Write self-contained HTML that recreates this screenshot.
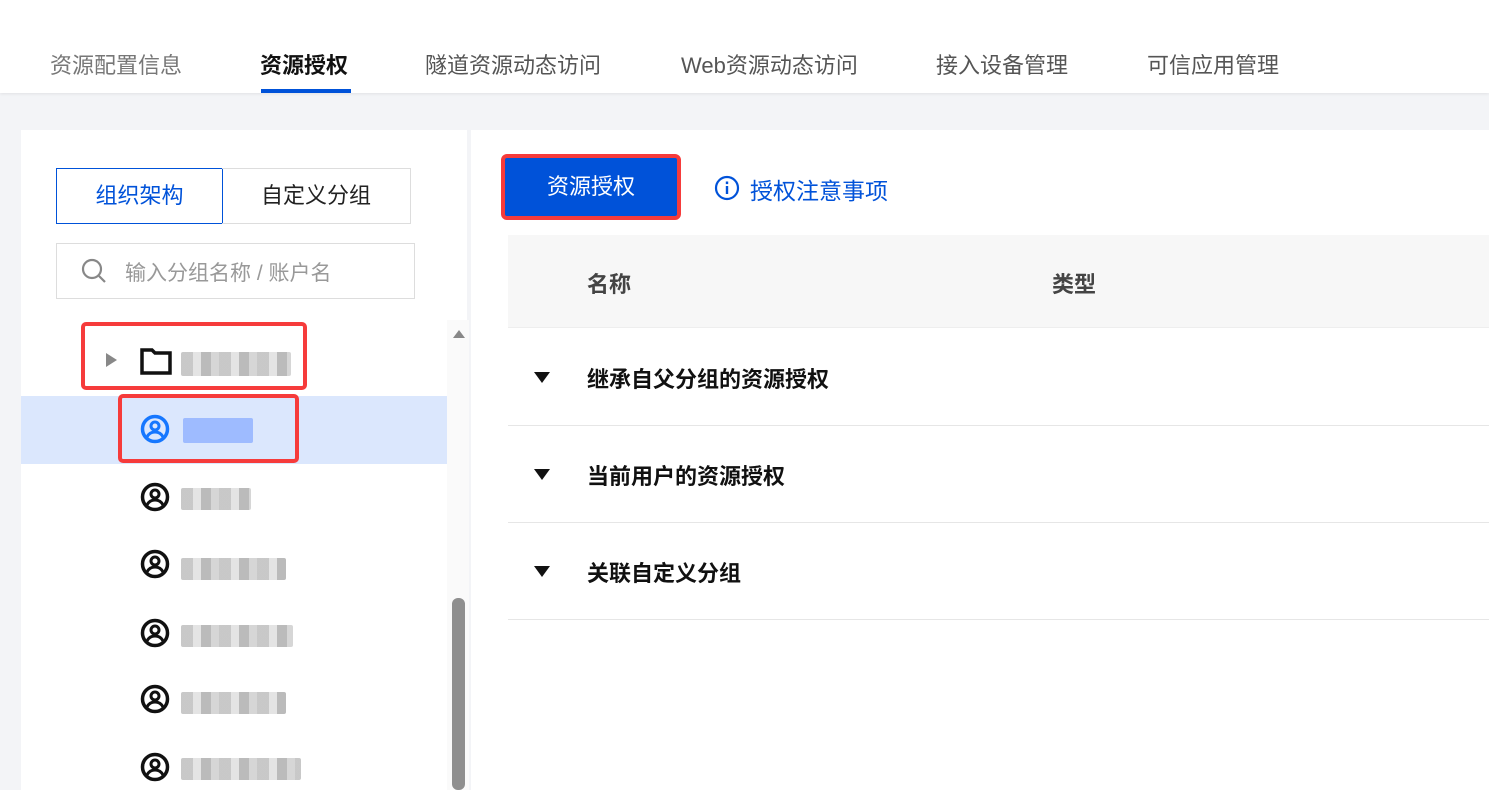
<!DOCTYPE html>
<html><head><meta charset="utf-8"><style>
*{margin:0;padding:0;box-sizing:border-box}
body{width:1489px;height:790px;overflow:hidden;background:#f3f4f7;font-family:"Liberation Sans","Noto Sans CJK SC",sans-serif;position:relative}
.abs{position:absolute}
.top{left:0;top:0;width:1489px;height:93px;background:#fff;box-shadow:0 1px 3px rgba(0,0,0,.08)}
.tab{top:48px;font-size:22px;color:#555;white-space:nowrap}
.left{left:21px;top:130px;width:446px;height:660px;background:#fff}
.right{left:471px;top:130px;width:1018px;height:660px;background:#fff}
.blur{height:22px;border-radius:2px;background:repeating-linear-gradient(90deg,#bbb 0 12px,#ddd 12px 20px,#aaa 20px 30px,#ccc 30px 38px);opacity:.8}
.red{border:4px solid #f63b3b;border-radius:5px}
.row{font-size:22px;font-weight:bold;color:#111}
</style></head><body>
<svg width="0" height="0" style="position:absolute"><defs><symbol id="u" viewBox="0 0 30 30"><circle cx="15" cy="15" r="12.5" fill="none" stroke="currentColor" stroke-width="3.5"/><circle cx="15" cy="12" r="4" fill="none" stroke="currentColor" stroke-width="3"/><path d="M7 23c2-4 5-5 8-5s6 1 8 5" fill="none" stroke="currentColor" stroke-width="3"/></symbol></defs></svg>
<div class="abs top"></div>
<div class="abs tab" style="left:50px;color:#777">资源配置信息</div>
<div class="abs tab" style="left:260px;color:#111;font-weight:bold">资源授权</div>
<div class="abs" style="left:261px;top:89px;width:90px;height:4px;background:#0052d9"></div>
<div class="abs tab" style="left:425px">隧道资源动态访问</div>
<div class="abs tab" style="left:681px">Web资源动态访问</div>
<div class="abs tab" style="left:936px">接入设备管理</div>
<div class="abs tab" style="left:1147px">可信应用管理</div>

<div class="abs left"></div>
<div class="abs" style="left:56px;top:168px;width:167px;height:56px;border:1px solid #0052d9;color:#0052d9;font-size:22px;text-align:center;line-height:54px">组织架构</div>
<div class="abs" style="left:222px;top:168px;width:189px;height:56px;border:1px solid #ddd;border-left:none;color:#222;font-size:22px;text-align:center;line-height:54px">自定义分组</div>
<div class="abs" style="left:56px;top:243px;width:359px;height:56px;border:1px solid #ddd"></div>
<svg class="abs" style="left:80px;top:257px" width="28" height="28" viewBox="0 0 28 28"><circle cx="12" cy="12" r="9" fill="none" stroke="#888" stroke-width="2.2"/><path d="M19 19l6 6" stroke="#888" stroke-width="2.2"/></svg>
<div class="abs" style="left:125px;top:257px;font-size:21px;color:#999">输入分组名称 / 账户名</div>

<div class="abs" style="left:21px;top:396px;width:426px;height:68px;background:#dbe7fd"></div>
<div class="abs red" style="left:81px;top:322px;width:226px;height:68px"></div>
<div class="abs red" style="left:118px;top:394px;width:181px;height:69px"></div>
<div class="abs" style="left:106px;top:353px;border-left:11px solid #888;border-top:7px solid transparent;border-bottom:7px solid transparent"></div>
<svg class="abs" style="left:140px;top:347px" width="32" height="28" viewBox="0 0 32 28"><path d="M2 3h10l3 3h15v20H2z" fill="none" stroke="#111" stroke-width="3.5"/></svg>
<div class="abs blur" style="left:181px;top:352px;width:110px;height:24px"></div>
<svg class="abs" style="left:140px;top:414px;color:#1677ff" width="30" height="30"><use href="#u"/></svg>
<div class="abs blur" style="left:183px;top:418px;width:70px;height:25px;background:#8fb0ff"></div>
<svg class="abs" style="left:140px;top:482px;color:#111" width="30" height="30"><use href="#u"/></svg><div class="abs blur" style="left:181px;top:488px;width:70px"></div>
<svg class="abs" style="left:140px;top:549px;color:#111" width="30" height="30"><use href="#u"/></svg><div class="abs blur" style="left:181px;top:558px;width:105px"></div>
<svg class="abs" style="left:140px;top:618px;color:#111" width="30" height="30"><use href="#u"/></svg><div class="abs blur" style="left:181px;top:625px;width:112px"></div>
<svg class="abs" style="left:140px;top:684px;color:#111" width="30" height="30"><use href="#u"/></svg><div class="abs blur" style="left:181px;top:692px;width:105px"></div>
<svg class="abs" style="left:140px;top:752px;color:#111" width="30" height="30"><use href="#u"/></svg><div class="abs blur" style="left:181px;top:758px;width:120px"></div>
<div class="abs" style="left:447px;top:320px;width:22px;height:470px;background:#fafafa"></div>
<div class="abs" style="left:453px;top:330px;border-bottom:8px solid #888;border-left:6px solid transparent;border-right:6px solid transparent"></div>
<div class="abs" style="left:452px;top:598px;width:13px;height:192px;background:#8f8f8f;border-radius:6px"></div>

<div class="abs right"></div>
<div class="abs" style="left:501px;top:154px;width:180px;height:66px;border:4px solid #f63b3b;border-radius:6px;background:#0052d9;color:#fff;font-size:22px;text-align:center;line-height:58px">资源授权</div>
<svg class="abs" style="left:714px;top:175px" width="26" height="26" viewBox="0 0 26 26"><circle cx="13" cy="13" r="11" fill="none" stroke="#0052d9" stroke-width="2.2"/><rect x="11.8" y="11" width="2.4" height="8" fill="#0052d9"/><rect x="11.8" y="6.5" width="2.4" height="2.6" fill="#0052d9"/></svg>
<div class="abs" style="left:750px;top:172px;font-size:23px;color:#0052d9">授权注意事项</div>
<div class="abs" style="left:508px;top:235px;width:981px;height:93px;background:#f7f7f7;border-bottom:1px solid #eee"></div>
<div class="abs" style="left:587px;top:267px;font-size:22px;font-weight:bold;color:#444">名称</div>
<div class="abs" style="left:1052px;top:267px;font-size:22px;font-weight:bold;color:#444">类型</div>
<div class="abs" style="left:508px;top:425px;width:981px;height:1px;background:#e6e6e6"></div>
<div class="abs" style="left:508px;top:522px;width:981px;height:1px;background:#e6e6e6"></div>
<div class="abs" style="left:508px;top:619px;width:981px;height:1px;background:#e6e6e6"></div>
<div class="abs" style="left:534px;top:372px;border-top:11px solid #111;border-left:8px solid transparent;border-right:8px solid transparent"></div>
<div class="abs" style="left:534px;top:469px;border-top:11px solid #111;border-left:8px solid transparent;border-right:8px solid transparent"></div>
<div class="abs" style="left:534px;top:566px;border-top:11px solid #111;border-left:8px solid transparent;border-right:8px solid transparent"></div>
<div class="abs row" style="left:587px;top:362px">继承自父分组的资源授权</div>
<div class="abs row" style="left:587px;top:459px">当前用户的资源授权</div>
<div class="abs row" style="left:587px;top:556px">关联自定义分组</div>
</body></html>
